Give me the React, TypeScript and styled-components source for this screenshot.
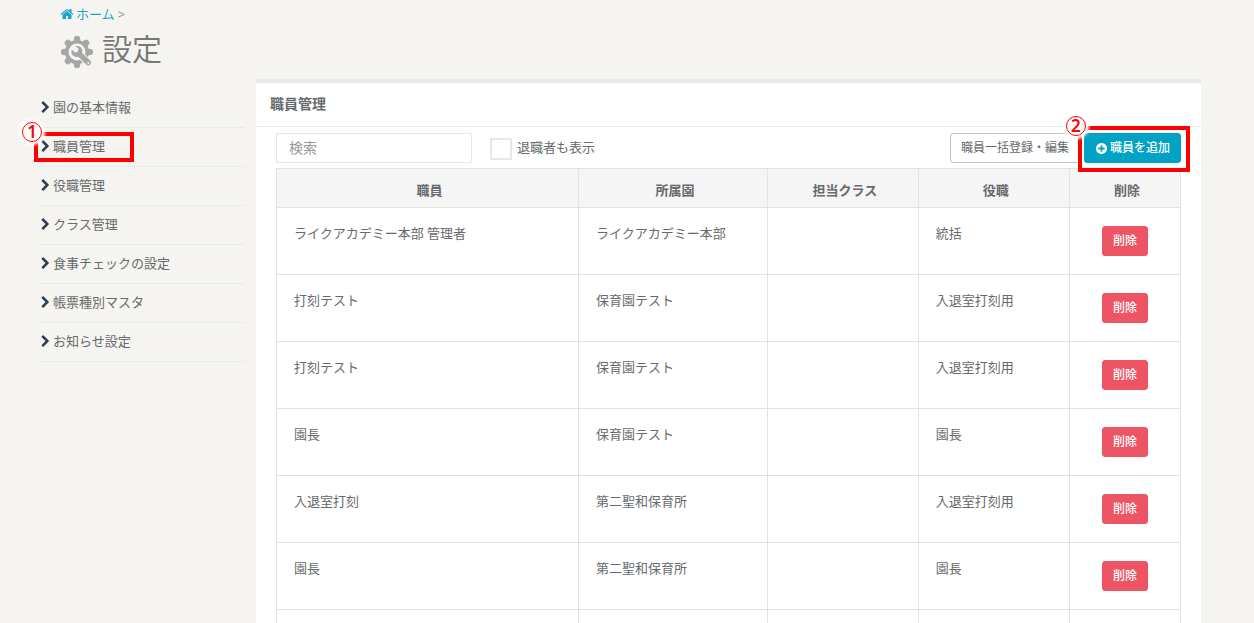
import React from "react";
import styled, { createGlobalStyle } from "styled-components";

const Global = createGlobalStyle`
  *, *::before, *::after { box-sizing: border-box; }
  body {
    margin: 0;
    background: #f5f4f0;
    color: #676a6c;
    font-family: "Open Sans", "Noto Sans CJK JP", sans-serif;
    font-size: 13px;
    line-height: 20px;
  }
  button, input { font: inherit; color: inherit; }
`;

const Page = styled.div`
  height: 100vh;
  overflow-y: auto;
  scrollbar-width: none;
`;

const PageHeader = styled.header`
  padding: 4px 60px 0;
`;

const Breadcrumb = styled.nav`
  display: flex;
  align-items: center;
  gap: 3px;
  color: #8a8c8e;
`;

const HomeLink = styled.a`
  display: flex;
  align-items: center;
  gap: 2px;
  color: #1ba5c4;
  text-decoration: none;
`;

const Title = styled.h1`
  display: flex;
  align-items: center;
  gap: 8px;
  margin: 2px 0 0;
  height: 46px;
  font-size: 30px;
  line-height: 44px;
  font-weight: 300;
  font-family: "Open Sans", "Noto Sans CJK JP DemiLight", "Noto Sans CJK JP", sans-serif;
  color: #777;
`;

const GearSlot = styled.span`
  display: flex;
  padding-top: 6px;
`;

const Body = styled.div`
  display: flex;
  align-items: flex-start;
  gap: 11px;
  padding: 7px 53px 0 39px;
`;

const SideNav = styled.ul`
  flex: 0 0 206px;
  margin: 10px 0 0;
  padding: 0;
  list-style: none;
`;

const SideItem = styled.li`
  position: relative;
  height: 39px;
  border-bottom: 1px solid #e7eaec;
`;

const SideLink = styled.a`
  display: flex;
  align-items: center;
  gap: 1px;
  height: 36px;
  color: inherit;
  text-decoration: none;
  svg { color: #2f4050; }
`;

const Panel = styled.main`
  flex: 1;
  min-width: 0;
  background: #fff;
  border-top: 4px solid #e4e9ee;
`;

const PanelTitle = styled.h2`
  margin: 0;
  padding: 11px 14px 12px;
  border-bottom: 1px solid #e7eaec;
  font-size: 14px;
  line-height: 20px;
  font-weight: 700;
`;

const PanelBody = styled.div`
  padding: 6px 20px 20px;
`;

const Toolbar = styled.div`
  display: flex;
  align-items: center;
  margin-bottom: 5px;
`;

const Search = styled.input`
  width: 196px;
  height: 30px;
  padding: 0 12px 2px;
  border: 1px solid #e5e6e7;
  border-radius: 1px;
  background: #fff;
  font-size: 14px;
  outline: none;
  &::placeholder { color: #999; opacity: 1; }
`;

const CheckLabel = styled.label`
  display: flex;
  align-items: center;
  gap: 5px;
  height: 28px;
  margin-left: 18px;
`;

const Checkbox = styled.input`
  appearance: none;
  width: 22px;
  height: 22px;
  margin: 2px 0 0;
  border: 2px solid #e7e7e7;
  background: #fff;
`;

const CheckText = styled.span`
  padding-bottom: 2px;
`;

const Actions = styled.div`
  display: flex;
  gap: 4px;
  margin-left: auto;
`;

const Button = styled.button<{ $tone: "plain" | "info" | "danger" }>`
  display: inline-flex;
  align-items: center;
  justify-content: center;
  gap: 2px;
  height: 30px;
  padding: 0 10px;
  border: 1px solid
    ${(p) => ({ plain: "#c4c4c4", info: "#00a3c4", danger: "#ed5565" })[p.$tone]};
  border-radius: 3px;
  background: ${(p) => ({ plain: "#fff", info: "#00a3c4", danger: "#ed5565" })[p.$tone]};
  color: ${(p) => (p.$tone === "plain" ? "#676a6c" : "#fff")};
  font-size: 12px;
  font-weight: ${(p) => (p.$tone === "plain" ? 400 : 500)};
  white-space: nowrap;
`;

const Marked = styled.span`
  position: relative;
  display: flex;
`;

const Highlight = styled.span<{ $inset: string }>`
  position: absolute;
  inset: ${(p) => p.$inset};
  border: 4px solid #f00;
  pointer-events: none;
`;

const Step = styled.span`
  position: absolute;
  left: -16px;
  top: -14px;
  width: 20px;
  height: 20px;
  border: 1px solid #f00;
  border-radius: 50%;
  background: #fff;
  box-shadow: 0 0 3px 3px #fff;
  color: #f00;
  font-family: "Noto Sans", sans-serif;
  font-size: 17px;
  font-weight: 600;
  line-height: 18px;
  text-align: center;
`;

const Table = styled.table`
  width: 100%;
  table-layout: fixed;
  border-collapse: collapse;
`;

const HeadCell = styled.th<{ $width: string }>`
  width: ${(p) => p.$width};
  height: 39px;
  padding: 3px 0 0 4px;
  border: 1px solid #e2e2e2;
  background: #f5f5f6;
  font-weight: 700;
`;

const Cell = styled.td<{ $center?: boolean }>`
  height: 67px;
  padding: ${(p) => (p.$center ? "0 0 1px" : "15px 17px")};
  border: 1px solid #e2e2e2;
  vertical-align: ${(p) => (p.$center ? "middle" : "top")};
  text-align: ${(p) => (p.$center ? "center" : "left")};
`;

const paths = {
  home: "M1472 992v480q0 26-19 45t-45 19h-384v-384h-256v384h-384q-26 0-45-19t-19-45v-480q0-1 .5-3t.5-3l575-474 575 474q1 2 1 6zm223-69l-62 74q-8 9-21 11h-3q-13 0-21-7l-692-577-692 577q-12 8-24 7-13-2-21-11l-62-74q-8-10-7-23.5t11-21.5l719-599q32-26 76-26t76 26l244 204v-195q0-14 9-23t23-9h192q14 0 23 9t9 23v408l219 182q10 8 11 21.5t-7 23.5z",
  chevron:
    "M1363 877l-742 742q-19 19-45 19t-45-19l-166-166q-19-19-19-45t19-45l531-531-531-531q-19-19-19-45t19-45l166-166q19-19 45-19t45 19l742 742q19 19 19 45t-19 45z",
  plus: "M1344 960v-128q0-26-19-45t-45-19h-256v-256q0-26-19-45t-45-19h-128q-26 0-45 19t-19 45v256h-256q-26 0-45 19t-19 45v128q0 26 19 45t45 19h256v256q0 26 19 45t45 19h128q26 0 45-19t19-45v-256h256q26 0 45-19t19-45zm320-64q0 209-103 385.5t-279.5 279.5-385.5 103-385.5-103-279.5-279.5-103-385.5 103-385.5 279.5-279.5 385.5-103 385.5 103 279.5 279.5 103 385.5z",
};

const Icon = ({ name, size }: { name: keyof typeof paths; size: number }) => (
  <svg width={size} height={size} viewBox="0 0 1792 1792" fill="currentColor" aria-hidden="true">
    <path d={paths[name]} />
  </svg>
);

const GearIcon = () => (
  <svg width="34" height="34" viewBox="-1 -1 34 34" fill="#a6a6a6" aria-hidden="true">
    {[0, 45, 90, 135, 180, 225, 270, 315].map((angle) => (
      <path key={angle} d="M12.500 6l.5-4q.3-2 2-2h2q1.700 0 2 2l.5 4z" transform={`rotate(${angle} 16 16)`} />
    ))}
    <circle cx="16" cy="16" r="12" />
    <circle cx="16" cy="16" r="8.500" fill="#f5f4f0" />
    <path
      d="M14.500 9.800l3 3-.6 3-3 .6-3.100-3q-1.200 4 1.200 6.200 2.300 2 5.300 1.200l8.200 8q2 1.600 3.800-.2t.2-3.800L21.200 17q.9-3.200-1.200-5.600-2.200-2.200-5.500-1.600z"
      stroke="#f5f4f0"
      strokeWidth="1.800"
      paintOrder="stroke"
    />
    <circle cx="27.300" cy="26.900" r="1" fill="#f5f4f0" />
  </svg>
);

const menu = [
  "園の基本情報",
  "職員管理",
  "役職管理",
  "クラス管理",
  "食事チェックの設定",
  "帳票種別マスタ",
  "お知らせ設定",
];

const columns = [
  ["職員", "33.4%"],
  ["所属園", "20.9%"],
  ["担当クラス", "16.7%"],
  ["役職", "16.7%"],
  ["削除", "12.3%"],
];

const staff = [
  ["ライクアカデミー本部 管理者", "ライクアカデミー本部", "", "統括"],
  ["打刻テスト", "保育園テスト", "", "入退室打刻用"],
  ["打刻テスト", "保育園テスト", "", "入退室打刻用"],
  ["園長", "保育園テスト", "", "園長"],
  ["入退室打刻", "第二聖和保育所", "", "入退室打刻用"],
  ["園長", "第二聖和保育所", "", "園長"],
];

export default function App() {
  return (
    <Page>
      <Global />
      <PageHeader>
        <Breadcrumb>
          <HomeLink href="#">
            <Icon name="home" size={14} />
            ホーム
          </HomeLink>
          &gt;
        </Breadcrumb>
        <Title>
          <GearSlot>
            <GearIcon />
          </GearSlot>
          設定
        </Title>
      </PageHeader>
      <Body>
        <SideNav>
          {menu.map((label) => (
            <SideItem key={label}>
              <SideLink href="#">
                <Icon name="chevron" size={13} />
                {label}
              </SideLink>
              {label === "職員管理" && (
                <Highlight $inset="4px 111px 4px -5px">
                  <Step>1</Step>
                </Highlight>
              )}
            </SideItem>
          ))}
        </SideNav>
        <Panel>
          <PanelTitle>職員管理</PanelTitle>
          <PanelBody>
            <Toolbar>
              <Search type="text" placeholder="検索" aria-label="検索" />
              <CheckLabel>
                <Checkbox type="checkbox" />
                <CheckText>退職者も表示</CheckText>
              </CheckLabel>
              <Actions>
                <Button type="button" $tone="plain">
                  職員一括登録・編集
                </Button>
                <Marked>
                  <Button type="button" $tone="info">
                    <Icon name="plus" size={13} />
                    職員を追加
                  </Button>
                  <Highlight $inset="-7px -9px -9px -6px">
                    <Step>2</Step>
                  </Highlight>
                </Marked>
              </Actions>
            </Toolbar>
            <Table>
              <thead>
                <tr>
                  {columns.map(([label, width]) => (
                    <HeadCell key={label} $width={width} scope="col">
                      {label}
                    </HeadCell>
                  ))}
                </tr>
              </thead>
              <tbody>
                {staff.map((row, index) => (
                  <tr key={index}>
                    {row.map((text, column) => (
                      <Cell key={column}>{text}</Cell>
                    ))}
                    <Cell $center>
                      <Button type="button" $tone="danger">
                        削除
                      </Button>
                    </Cell>
                  </tr>
                ))}
                <tr>
                  {columns.map(([label]) => (
                    <Cell key={label} />
                  ))}
                </tr>
              </tbody>
            </Table>
          </PanelBody>
        </Panel>
      </Body>
    </Page>
  );
}
